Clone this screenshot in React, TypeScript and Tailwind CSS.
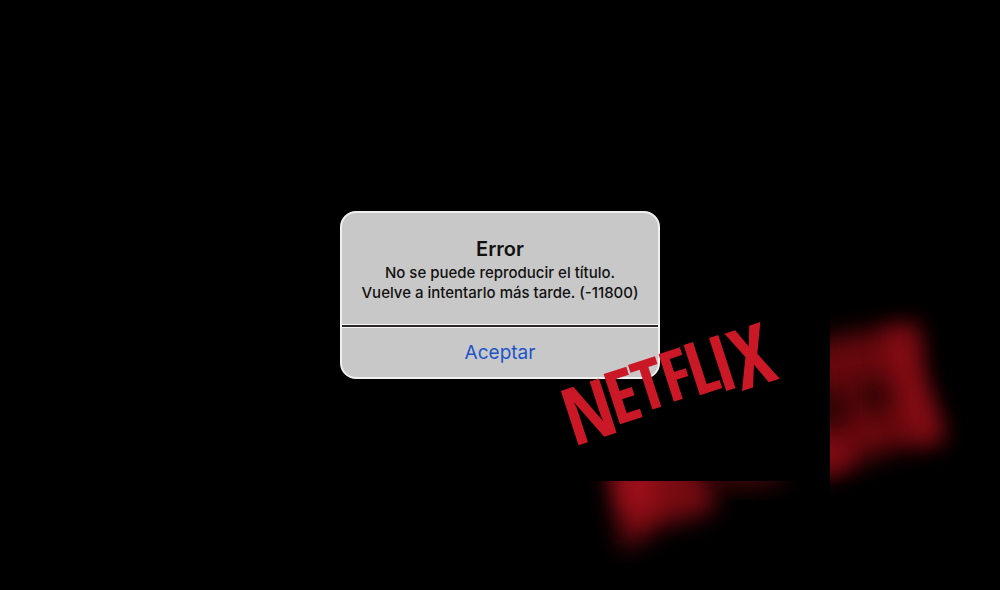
const wordmark = [
  { letter: "N", x: 15, y: 69, size: 80 },
  { letter: "E", x: 52, y: 62, size: 74 },
  { letter: "T", x: 81, y: 58, size: 70 },
  { letter: "F", x: 109, y: 57, size: 70 },
  { letter: "L", x: 136, y: 59, size: 74 },
  { letter: "I", x: 157, y: 63, size: 78 },
  { letter: "X", x: 187, y: 68, size: 84 },
];

function Backdrop() {
  return (
    <svg
      className="absolute inset-0 size-full"
      viewBox="0 0 1000 590"
      preserveAspectRatio="xMidYMid slice"
      aria-hidden="true"
    >
      <defs>
        <filter id="soft" x="-50%" y="-50%" width="200%" height="200%" colorInterpolationFilters="sRGB">
          <feGaussianBlur stdDeviation="12" />
        </filter>
        <clipPath id="right-side">
          <rect x="830" y="0" width="170" height="590" />
        </clipPath>
        <clipPath id="bottom-side">
          <rect x="0" y="481" width="1000" height="109" />
        </clipPath>
      </defs>
      <g clipPath="url(#right-side)">
        <path d="M780 348 L917 322 L922 374 L946 442 L890 450 L830 474 L780 490Z" fill="#66080d" filter="url(#soft)" />
        <path d="M886 334 L912 328 L918 380 L940 438 L916 438 L896 390Z" fill="#8c0d16" filter="url(#soft)" />
        <ellipse cx="874" cy="396" rx="18" ry="16" fill="#2a0304" filter="url(#soft)" />
        <ellipse cx="832" cy="408" rx="14" ry="20" fill="#1a0102" filter="url(#soft)" />
        <ellipse cx="832" cy="456" rx="16" ry="14" fill="#8c0d16" filter="url(#soft)" />
      </g>
      <g clipPath="url(#bottom-side)">
        <path d="M600 430 L680 430 L718 500 L704 514 L662 524 L624 550Z" fill="#780b12" filter="url(#soft)" />
        <ellipse cx="638" cy="488" rx="18" ry="26" fill="#a0101b" filter="url(#soft)" />
        <ellipse cx="744" cy="472" rx="42" ry="14" fill="#4a060a" filter="url(#soft)" />
      </g>
    </svg>
  );
}

function NetflixLogo() {
  return (
    <svg
      className="pointer-events-none absolute top-24 left-52 h-40 w-60 overflow-visible"
      viewBox="0 0 240 160"
      role="img"
      aria-label="Netflix"
    >
      <g transform="translate(14 71) rotate(-18)">
        <text
          textAnchor="middle"
          fill="#cb1826"
          fontFamily="'Open Sans Condensed', 'Roboto Condensed', sans-serif"
          fontWeight="600"
        >
          {wordmark.map(({ letter, x, y, size }) => (
            <tspan key={letter} x={x} y={y} fontSize={size}>
              {letter}
            </tspan>
          ))}
        </text>
      </g>
    </svg>
  );
}

export default function App() {
  return (
    <main className="relative flex min-h-screen items-center justify-center overflow-hidden bg-black font-['Inter',sans-serif]">
      <Backdrop />
      <div className="relative w-80">
        <section
          role="alertdialog"
          aria-labelledby="alert-title"
          aria-describedby="alert-message"
          className="overflow-hidden rounded-2xl border-2 border-[#f0f0f0] bg-[#c9c8c8] text-center text-[#111111]"
        >
          <div className="px-2 pt-6 pb-[22px]">
            <h1 id="alert-title" className="text-xl leading-6 font-semibold">
              Error
            </h1>
            <p id="alert-message" className="pt-0.5 text-[15px] leading-5 font-medium">
              No se puede reproducir el título.
              <br />
              Vuelve a intentarlo más tarde. (-11800)
            </p>
          </div>
          <button
            type="button"
            className="block w-full border-t-2 border-[#2b2527] pt-0.5 text-[19px] leading-12 text-[#1c55c8] shadow-[inset_0_1px_0_#f4f4f4,0_-1px_0_#f4f4f4]"
          >
            Aceptar
          </button>
        </section>
        <NetflixLogo />
      </div>
    </main>
  );
}
